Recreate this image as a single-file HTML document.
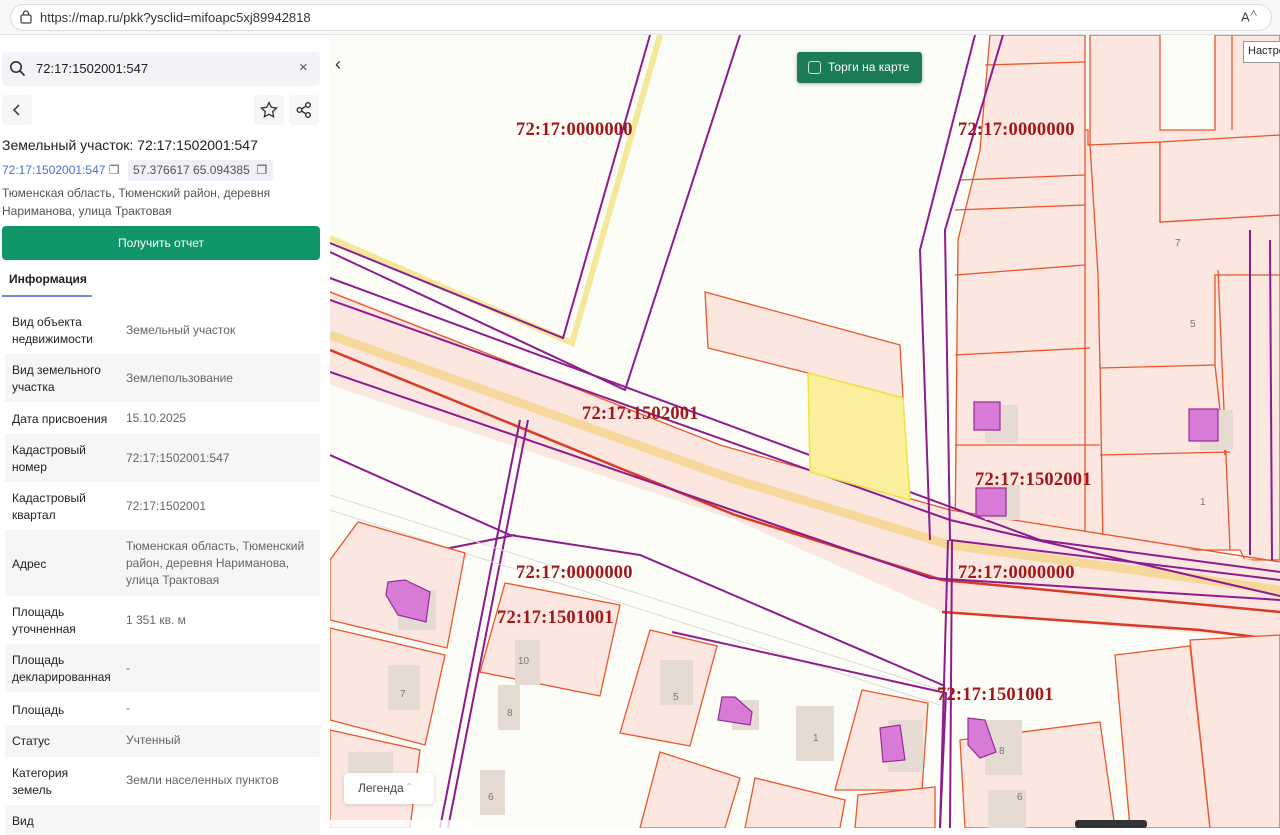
<!DOCTYPE html>
<html><head><meta charset="utf-8"><style>
*{margin:0;padding:0;box-sizing:border-box}
body{width:1280px;height:828px;overflow:hidden;font-family:"Liberation Sans","Noto Sans CJK SC",sans-serif;background:#fff;position:relative}
.bar{position:absolute;left:0;top:0;width:1280px;height:35px;background:#f7f7f7;border-bottom:1px solid #e2e2e2}
.url{position:absolute;left:10px;top:4px;width:1262px;height:27px;border-radius:14px;background:#fff;border:1px solid #dcdcdc;font-size:13px;color:#333;padding:5px 0 0 29px}
.panel{position:absolute;left:0;top:35px;width:330px;height:793px;background:#fff}
.abs{position:absolute}
.row{position:absolute;left:5px;width:315px;font-size:12px;line-height:17px}
.row.g{background:#f6f6f8}
.row .l{position:absolute;left:7px;color:#222}
.row .v{position:absolute;left:121px;color:#666}
.lab{position:absolute;font-family:"Liberation Serif",serif;font-weight:bold;font-size:18.5px;letter-spacing:0.2px;color:#a3161a}
</style></head><body>
<div class="bar"><div class="url">https://map.ru/pkk?ysclid=mifoapc5xj89942818</div>
<svg class="abs" style="left:19px;top:10px" width="14" height="14" viewBox="0 0 14 14"><rect x="2" y="5" width="10" height="8" rx="1.5" fill="none" stroke="#444" stroke-width="1.3"/><path d="M4.5 5V3.5a2.5 2.5 0 0 1 5 0V5" fill="none" stroke="#444" stroke-width="1.3"/></svg>
<div class="abs" style="left:1241px;top:8px;font-size:13px;color:#444">A<sup style="font-size:8px">∧</sup></div>
</div>
<svg class="abs" style="left:330px;top:35px" width="950" height="793" viewBox="330 35 950 793">
<rect x="330" y="35" width="950" height="793" fill="#fdfdf7"/>
<g fill="#fbe6e0" stroke="#e9562e" stroke-width="1.3">
<polygon points="1005,35 1085,35 1085,130 1088,130 1088,145 1090,145 1090,35 1160,35 1160,130 1215,130 1215,35 1280,35 1280,560 1245,560 1240,550 1110,550 955,540 958,240 980,150 990,35"/>
<polygon points="1088,145 1160,142 1160,222 1280,215 1280,275 1215,275 1215,365 1100,368 1098,275 1090,145"/>
<polygon points="1160,142 1280,135 1280,215 1160,222"/>
<polyline fill="none" points="955,210 1085,205"/><polyline fill="none" points="955,275 1085,265"/><polyline fill="none" points="955,355 1090,348"/><polyline fill="none" points="955,445 1100,445"/><polyline fill="none" points="985,65 1085,62"/><polyline fill="none" points="960,180 1085,175"/><polyline fill="none" points="1085,130 1085,550"/>
<polyline fill="none" points="1100,365 1103,548"/><polyline fill="none" points="1100,455 1230,452"/><polyline fill="none" points="1215,365 1225,455"/><polyline fill="none" points="1218,270 1230,550"/><polyline fill="none" points="1232,130 1232,35"/>
</g>
<polyline points="660,35 572,343 330,238" fill="none" stroke="#f3e79a" stroke-width="6"/>
<polyline points="650,35 563,338 330,243" fill="none" stroke="#8e1c8e" stroke-width="2"/>
<polyline points="740,35 625,390 330,252" fill="none" stroke="#8e1c8e" stroke-width="2"/>
<polygon points="330,290 720,445 955,510 1280,565 1280,640 942,612 735,520 330,385" fill="#fbe6e0"/>
<polyline points="330,335 730,478 950,545 1280,590" fill="none" stroke="#f6d99a" stroke-width="9"/>
<polyline points="330,292 720,445 950,510 1280,562" fill="none" stroke="#e9562e" stroke-width="1.3"/>
<polyline points="330,350 735,515 942,580 1280,612" fill="none" stroke="#d93a26" stroke-width="2.5"/>
<polyline points="942,612 1200,630 1280,640" fill="none" stroke="#d93a26" stroke-width="2.5"/>
<polyline points="330,278 1040,540 1280,572" fill="none" stroke="#8e1c8e" stroke-width="2"/>
<polyline points="330,300 950,520 1280,596" fill="none" stroke="#8e1c8e" stroke-width="2"/>
<polyline points="330,372 930,578 1280,600" fill="none" stroke="#8e1c8e" stroke-width="2"/>
<polyline points="330,455 510,535 640,555 945,686" fill="none" stroke="#8e1c8e" stroke-width="2"/>
<polyline points="330,572 515,535" fill="none" stroke="#8e1c8e" stroke-width="2"/>
<polyline points="975,35 920,250 930,540" fill="none" stroke="#8e1c8e" stroke-width="2"/>
<polyline points="1003,35 945,230 950,540 1280,580" fill="none" stroke="#8e1c8e" stroke-width="2"/>
<polyline points="948,540 940,828" fill="none" stroke="#8e1c8e" stroke-width="2"/>
<polyline points="952,540 950,828" fill="none" stroke="#8e1c8e" stroke-width="2"/>
<polyline points="1250,230 1250,555" fill="none" stroke="#8e1c8e" stroke-width="2"/>
<polyline points="1270,240 1272,560" fill="none" stroke="#8e1c8e" stroke-width="2"/>
<polyline points="520,420 440,828" fill="none" stroke="#8e1c8e" stroke-width="2"/>
<polyline points="528,420 448,828" fill="none" stroke="#8e1c8e" stroke-width="2"/>
<polyline points="330,495 940,690" fill="none" stroke="#d9d9d9" stroke-width="1"/>
<polyline points="330,510 940,705" fill="none" stroke="#d9d9d9" stroke-width="1"/>
<polygon points="705,292 900,345 903,398 808,373 708,348" fill="#fbe6e0" stroke="#e9562e" stroke-width="1.3"/>
<polygon points="808,373 903,398 910,500 810,472" fill="#f9ef9c" stroke="#f2e23a" stroke-width="1.5"/>
<g fill="#fbe6e0" stroke="#e9562e" stroke-width="1.3">
<polygon points="358,522 465,553 447,648 330,620 330,560"/>
<polygon points="330,628 445,655 425,745 330,720"/>
<polygon points="330,730 420,750 410,828 330,828"/>
<polygon points="505,583 620,605 600,696 480,672"/>
<polygon points="650,630 717,646 690,746 620,733"/>
<polygon points="862,690 928,703 922,790 835,790"/>
<polygon points="660,752 740,778 725,828 640,828"/>
<polygon points="755,778 845,800 840,828 745,828"/>
<polygon points="858,795 935,787 935,828 855,828"/>
<polygon points="960,740 1100,722 1115,828 965,828"/>
<polygon points="1115,655 1190,646 1210,828 1130,828"/>
<polygon points="1190,640 1280,635 1280,828 1210,828"/>
</g>
<polyline points="672,632 946,693 940,828" fill="none" stroke="#8e1c8e" stroke-width="2"/>
<g fill="#e6dbd3"><rect x="398" y="590" width="38" height="40"/><rect x="388" y="665" width="32" height="45"/><rect x="515" y="640" width="25" height="45"/><rect x="498" y="685" width="22" height="45"/><rect x="660" y="660" width="33" height="45"/><rect x="732" y="700" width="27" height="30"/><rect x="796" y="706" width="38" height="55"/><rect x="888" y="720" width="35" height="52"/><rect x="985" y="720" width="37" height="55"/><rect x="480" y="770" width="25" height="45"/><rect x="988" y="790" width="38" height="38"/><rect x="348" y="752" width="45" height="40"/><rect x="985" y="405" width="33" height="38"/><rect x="1200" y="410" width="33" height="40"/><rect x="985" y="485" width="35" height="35"/></g>
<g fill="#d77bd6" stroke="#9b2a9b" stroke-width="1.2"><polygon points="388,582 405,580 430,592 426,622 398,615 386,595"/><polygon points="722,697 735,697 752,712 750,725 718,720"/><polygon points="880,728 900,725 905,760 883,762"/><polygon points="968,718 985,720 996,752 980,758 968,745"/><rect x="974" y="402" width="26" height="28"/><rect x="1189" y="409" width="29" height="32"/><rect x="976" y="488" width="30" height="28"/></g>
<g font-family="Liberation Sans" font-size="10" fill="#777"><text x="518" y="664">10</text><text x="400" y="697">7</text><text x="507" y="716">8</text><text x="673" y="700">5</text><text x="813" y="741">1</text><text x="488" y="800">6</text><text x="1017" y="800">6</text><text x="999" y="754">8</text><text x="1175" y="246">7</text><text x="1190" y="327">5</text><text x="1200" y="505">1</text></g>
<rect x="330" y="820" width="140" height="8" fill="#fff" opacity=".8"/>
<rect x="1075" y="820" width="72" height="8" rx="3" fill="#333"/>
</svg>
<div class="lab" style="left:516px;top:120px">72:17:0000000</div>
<div class="lab" style="left:958px;top:120px">72:17:0000000</div>
<div class="lab" style="left:582px;top:404px">72:17:1502001</div>
<div class="lab" style="left:975px;top:470px">72:17:1502001</div>
<div class="lab" style="left:516px;top:563px">72:17:0000000</div>
<div class="lab" style="left:958px;top:563px">72:17:0000000</div>
<div class="lab" style="left:497px;top:608px">72:17:1501001</div>
<div class="lab" style="left:937px;top:685px">72:17:1501001</div>
<div class="abs" style="left:335px;top:54px;font-size:18px;color:#333">&#8249;</div>
<div class="abs" style="left:797px;top:52px;width:125px;height:31px;background:#1b7b56;border-radius:3px;box-shadow:0 1px 4px rgba(0,0,0,.3)"><div class="abs" style="left:11px;top:9px;width:13px;height:13px;border:1.3px solid #cde;border-radius:3px"></div><div class="abs" style="left:31px;top:8px;color:#fff;font-size:12px">Торги на карте</div></div>
<div class="abs" style="left:1243px;top:41px;width:40px;height:22px;background:#fff;border:1px solid #999;font-size:11px;padding:3px 4px;color:#222">Настро</div>
<div class="abs" style="left:344px;top:773px;width:90px;height:31px;background:#fff;border-radius:4px;box-shadow:0 1px 4px rgba(0,0,0,.15);font-size:12px;color:#444;padding:8px 14px">Легенда <span style="color:#aaa">&#710;</span></div>
<div class="panel">
<div class="abs" style="left:2px;top:17px;width:318px;height:34px;background:#f3f4f8;border-radius:4px"></div>
<svg class="abs" style="left:9px;top:25px" width="17" height="17" viewBox="0 0 17 17"><circle cx="7" cy="7" r="5.2" fill="none" stroke="#333" stroke-width="1.6"/><path d="M11 11l4.5 4.5" stroke="#333" stroke-width="1.7"/></svg>
<div class="abs" style="left:36px;top:26px;font-size:13px;color:#222">72:17:1502001:547</div>
<div class="abs" style="left:299px;top:24px;font-size:15px;color:#555">×</div>
<div class="abs" style="left:2px;top:60px;width:30px;height:30px;background:#f5f6f8;border-radius:4px"></div>
<svg class="abs" style="left:10px;top:68px" width="14" height="14"><path d="M9 2L4 7l5 5" fill="none" stroke="#333" stroke-width="1.5"/></svg>
<div class="abs" style="left:254px;top:60px;width:30px;height:30px;background:#f5f6f8;border-radius:4px"></div>
<div class="abs" style="left:289px;top:60px;width:30px;height:30px;background:#f5f6f8;border-radius:4px"></div>
<svg class="abs" style="left:260px;top:66px" width="18" height="18" viewBox="0 0 18 18"><path d="M9 1.5l2.3 4.8 5.2.7-3.8 3.6.9 5.2L9 13.3 4.4 15.8l.9-5.2L1.5 7l5.2-.7z" fill="none" stroke="#333" stroke-width="1.3"/></svg>
<svg class="abs" style="left:295px;top:66px" width="18" height="18" viewBox="0 0 18 18"><circle cx="13" cy="4" r="2.3" fill="none" stroke="#333" stroke-width="1.4"/><circle cx="4.5" cy="9" r="2.3" fill="none" stroke="#333" stroke-width="1.4"/><circle cx="13" cy="14" r="2.3" fill="none" stroke="#333" stroke-width="1.4"/><path d="M6.5 8l4.5-2.8M6.5 10l4.5 2.8" stroke="#333" stroke-width="1.4"/></svg>
<div class="abs" style="left:2px;top:102px;font-size:14px;color:#222">Земельный участок: 72:17:1502001:547</div>
<div class="abs" style="left:2px;top:128px;font-size:12px;color:#4a6ee0">72:17:1502001:547 <span style="color:#666">&#10064;</span></div>
<div class="abs" style="left:128px;top:125px;width:145px;height:21px;background:#eef0f5;border-radius:3px;font-size:12px;color:#555;padding:3px 5px">57.376617 65.094385 &nbsp;&#10064;</div>
<div class="abs" style="left:2px;top:149px;font-size:12px;color:#555;line-height:18px">Тюменская область, Тюменский район, деревня<br>Нариманова, улица Трактовая</div>
<div class="abs" style="left:2px;top:191px;width:318px;height:34px;background:#10946a;border-radius:4px;color:#fff;font-size:12px;text-align:center;line-height:34px">Получить отчет</div>
<div class="abs" style="left:9px;top:237px;font-size:12px;font-weight:bold;color:#222">Информация</div>
<div class="abs" style="left:2px;top:260px;width:90px;height:2px;background:#6b8fe0"></div>
<div class="row" style="top:271px;height:48px"><span class="l" style="top:8px">Вид объекта<br>недвижимости</span><span class="v" style="top:16px">Земельный участок</span></div>
<div class="row g" style="top:319px;height:48px"><span class="l" style="top:8px">Вид земельного<br>участка</span><span class="v" style="top:16px">Землепользование</span></div>
<div class="row" style="top:367px;height:32px"><span class="l" style="top:9px">Дата присвоения</span><span class="v" style="top:8px">15.10.2025</span></div>
<div class="row g" style="top:399px;height:48px"><span class="l" style="top:8px">Кадастровый<br>номер</span><span class="v" style="top:16px">72:17:1502001:547</span></div>
<div class="row" style="top:447px;height:48px"><span class="l" style="top:8px">Кадастровый<br>квартал</span><span class="v" style="top:16px">72:17:1502001</span></div>
<div class="row g" style="top:495px;height:66px"><span class="l" style="top:26px">Адрес</span><span class="v" style="top:8px">Тюменская область, Тюменский<br>район, деревня Нариманова,<br>улица Трактовая</span></div>
<div class="row" style="top:561px;height:48px"><span class="l" style="top:8px">Площадь<br>уточненная</span><span class="v" style="top:16px">1 351 кв. м</span></div>
<div class="row g" style="top:609px;height:48px"><span class="l" style="top:8px">Площадь<br>декларированная</span><span class="v" style="top:16px">-</span></div>
<div class="row" style="top:657px;height:33px"><span class="l" style="top:10px">Площадь</span><span class="v" style="top:8px">-</span></div>
<div class="row g" style="top:690px;height:32px"><span class="l" style="top:8px">Статус</span><span class="v" style="top:7px">Учтенный</span></div>
<div class="row" style="top:722px;height:48px"><span class="l" style="top:8px">Категория<br>земель</span><span class="v" style="top:15px">Земли населенных пунктов</span></div>
<div class="row g" style="top:770px;height:30px"><span class="l" style="top:8px">Вид</span></div>
</div>
</body></html>
